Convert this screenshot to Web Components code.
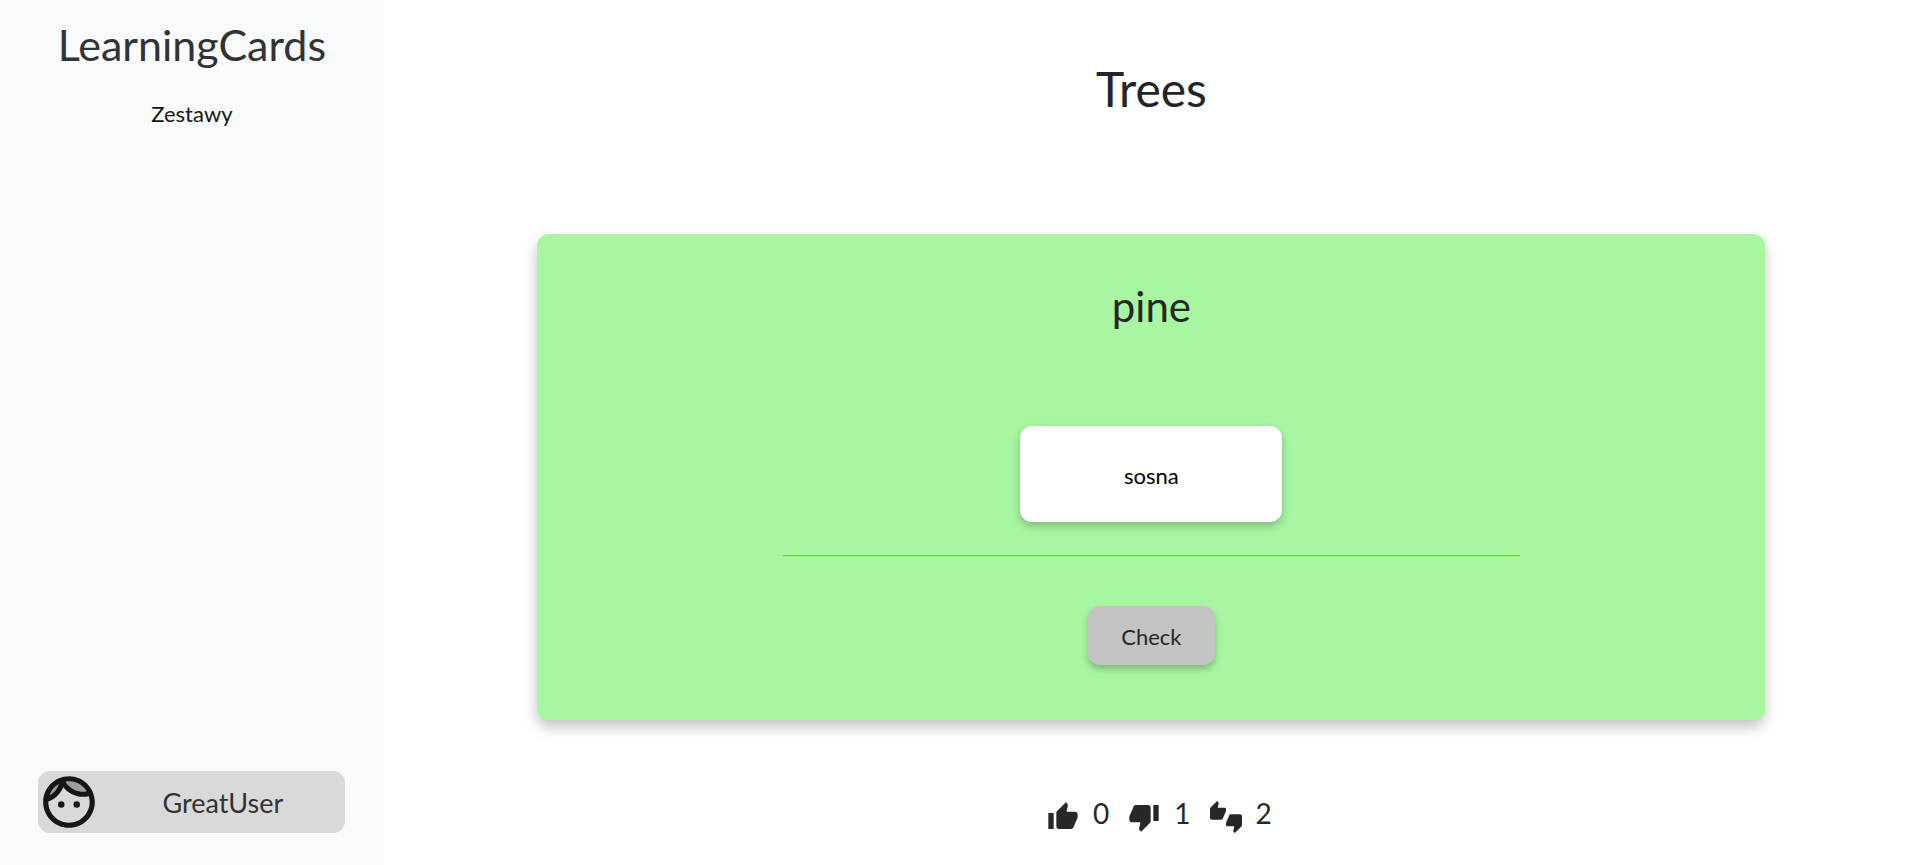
<!DOCTYPE html>
<html lang="en">
<head>
<meta charset="utf-8">
<meta name="viewport" content="width=device-width, initial-scale=1">
<title>LearningCards</title>
<style>
body { margin: 0; font-family: Lato, "Open Sans", sans-serif; color: #212529; background: #fff; }
</style>
</head>
<body>
<learning-app></learning-app>
<script>
const define = (name, html) => {
  const template = document.createElement('template');
  template.innerHTML = html;
  customElements.define(name, class extends HTMLElement {
    constructor() {
      super();
      this.attachShadow({ mode: 'open' }).append(template.content.cloneNode(true));
    }
  });
};

define('user-button', `
<style>
:host { display: block; }
button { display: flex; align-items: center; width: 100%; height: 62px; padding: 0; border: 0; border-radius: 12px; background: #d9d9d9; color: #333; font: inherit; font-size: 27px; }
svg { width: 62px; height: 62px; flex: none; color: #161616; }
span { flex: 1; text-align: center; }
</style>
<button type="button">
<svg viewBox="0 0 24 24" fill="currentColor" aria-hidden="true"><path opacity=".3" d="M17.5 8c.46 0 .91-.05 1.34-.12C17.44 5.56 14.9 4 12 4c-.46 0-.91.05-1.34.12C12.06 6.44 14.6 8 17.5 8zM8.08 5.03C6.37 6 5.05 7.58 4.42 9.47c1.71-.97 3.03-2.55 3.66-4.44z"/><path d="M12 2C6.48 2 2 6.48 2 12s4.48 10 10 10 10-4.48 10-10S17.52 2 12 2zm0 2c2.9 0 5.44 1.56 6.84 3.88-.43.07-.88.12-1.34.12-2.9 0-5.44-1.56-6.84-3.88.43-.07.88-.12 1.34-.12zM8.08 5.03C7.45 6.92 6.13 8.5 4.42 9.47 5.05 7.58 6.37 6 8.08 5.03zM12 20c-4.41 0-8-3.59-8-8 0-.05.01-.1.01-.15 2.6-.98 4.68-2.99 5.74-5.55 1.83 2.26 4.62 3.7 7.75 3.7.75 0 1.47-.09 2.17-.24.21.71.33 1.46.33 2.24 0 4.41-3.59 8-8 8z"/><circle cx="9" cy="13" r="1.25"/><circle cx="15" cy="13" r="1.25"/></svg>
<span><slot></slot></span>
</button>`);

define('side-bar', `
<style>
:host { display: flex; flex-direction: column; align-items: center; box-sizing: border-box; padding: 19px 0 32px; background: #f8fafc; }
.brand { font-size: 43px; line-height: 52px; color: #333; }
nav { margin-top: 29px; font-size: 22px; line-height: 28px; }
a { color: #161616; text-decoration: none; }
user-button { width: 80%; margin-top: auto; }
</style>
<div class="brand">LearningCards</div>
<nav><a href="#sets">Zestawy</a></nav>
<user-button>GreatUser</user-button>`);

define('answer-option', `
<style>
:host { display: block; }
button { display: block; box-sizing: border-box; min-width: 262px; height: 96px; padding: 2px 24px 0; border: 0; border-radius: 12px; background: #fff; color: #000; font: inherit; font-size: 22px; box-shadow: 0 4px 8px rgba(0,0,0,.24); }
</style>
<button type="button"><slot></slot></button>`);

define('check-button', `
<style>
:host { display: block; }
button { display: block; height: 59px; padding: 2px 33px 0; border: 0; border-radius: 12px; background: #c4c4c4; color: #272727; font: inherit; font-size: 22px; box-shadow: 0 4px 6px rgba(0,0,0,.24); }
</style>
<button type="button"><slot></slot></button>`);

define('quiz-card', `
<style>
:host { display: flex; flex-direction: column; align-items: center; box-sizing: border-box; padding: 48px 0 55px; border-radius: 12px; background: #a8f5a2; box-shadow: 0 7px 14px rgba(0,0,0,.24); }
h2 { margin: 0 0 96px; font-weight: 400; font-size: 42px; line-height: 48px; color: #272727; }
hr { width: 60%; height: 1px; margin: 33px 0 50px; border: 0; background: #98a597; }
</style>
<h2><slot name="question"></slot></h2>
<slot></slot>
<hr>
<slot name="action"></slot>`);

const icons = {
  up: 'M1 21h4V9H1v12zm22-11c0-1.1-.9-2-2-2h-6.31l.95-4.57.03-.32c0-.41-.17-.79-.44-1.06L14.17 1 7.59 7.59C7.22 7.95 7 8.45 7 9v10c0 1.1.9 2 2 2h9c.83 0 1.54-.5 1.84-1.22l3.02-7.05c.09-.23.14-.47.14-.73v-2z',
  down: 'M15 3H6c-.83 0-1.54.5-1.84 1.22l-3.02 7.05c-.09.23-.14.47-.14.73v2c0 1.1.9 2 2 2h6.31l-.95 4.57-.03.32c0 .41.17.79.44 1.06L9.83 23l6.59-6.59c.36-.36.58-.86.58-1.41V5c0-1.1-.9-2-2-2zm4 0v12h4V3h-4z',
  both: 'M12 6c0-.55-.45-1-1-1H5.82l.66-3.18.02-.23c0-.31-.13-.59-.33-.8L5.38 0 .44 4.94C.17 5.21 0 5.59 0 6v6.5c0 .83.67 1.5 1.5 1.5h6.75c.62 0 1.15-.38 1.38-.91l2.26-5.29c.07-.17.11-.36.11-.55V6zm10.5 4h-6.75c-.62 0-1.15.38-1.38.91l-2.26 5.29c-.07.17-.11.36-.11.55V18c0 .55.45 1 1 1h5.18l-.66 3.18-.02.24c0 .31.13.59.33.8l.79.78 4.94-4.94c.27-.27.44-.65.44-1.06v-6.5c0-.83-.67-1.5-1.5-1.5z'
};
customElements.define('vote-count', class extends HTMLElement {
  constructor() {
    super();
    this.attachShadow({ mode: 'open' }).innerHTML = `
<style>
:host { display: flex; align-items: flex-start; gap: 14px; font-size: 28px; line-height: 24px; color: #272727; }
svg { width: 32px; height: 32px; }
</style>
<svg viewBox="0 0 24 24" fill="currentColor" aria-hidden="true"><path d="${icons[this.getAttribute('kind')]}"/></svg>
<span><slot></slot></span>`;
  }
});

define('learning-app', `
<style>
:host { display: grid; grid-template-columns: 20% 80%; min-height: 100vh; }
main { display: flex; flex-direction: column; align-items: center; padding: 59px 0 32px; }
h1 { margin: 0 0 115px; font-weight: 400; font-size: 48px; line-height: 60px; }
quiz-card { width: 80%; }
.votes { display: flex; gap: 19px; margin-top: 81px; padding-left: 16px; }
</style>
<side-bar></side-bar>
<main>
<h1>Trees</h1>
<quiz-card>
<span slot="question">pine</span>
<answer-option>sosna</answer-option>
<check-button slot="action">Check</check-button>
</quiz-card>
<div class="votes">
<vote-count kind="up">0</vote-count>
<vote-count kind="down">1</vote-count>
<vote-count kind="both">2</vote-count>
</div>
</main>`);
</script>
</body>
</html>
